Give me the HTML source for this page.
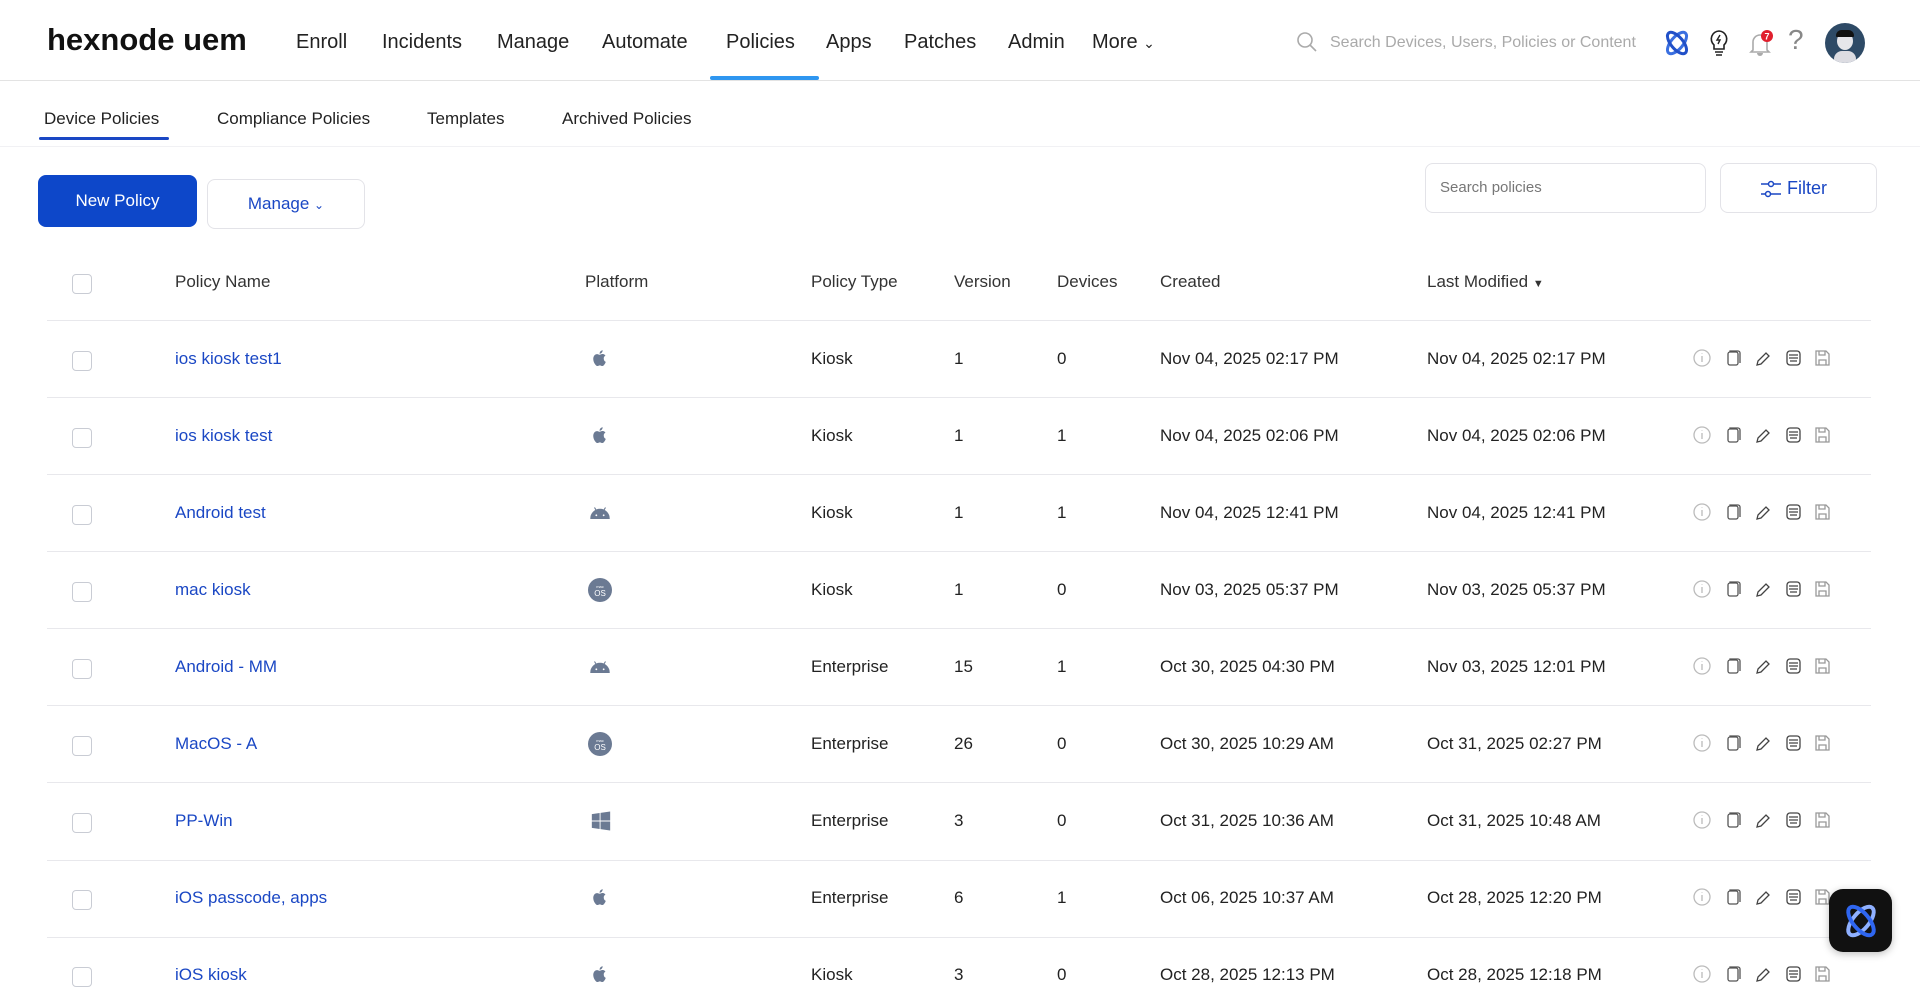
<!DOCTYPE html>
<html><head><meta charset="utf-8"><style>
*{box-sizing:border-box;margin:0;padding:0}
body{width:1920px;height:978px;overflow:hidden;background:#fff;font-family:"Liberation Sans",sans-serif;color:#1b1b1b;position:relative}
.a{position:absolute;white-space:nowrap}
.nav{font-size:20px;color:#222;top:31px}
.sub{font-size:17px;color:#222;top:109px}
.th{font-size:17px;color:#333;top:272px}
.cell{font-size:17px;color:#222}
.link{color:#1a47c4}
.line{position:absolute;left:47px;width:1824px;height:1px;background:#e8e8ec}
.cb{position:absolute;left:72px;width:20px;height:20px;border:1px solid #c9ccd4;border-radius:4px;background:#fff}
</style></head><body>
<svg width="0" height="0" style="position:absolute">
<defs>
<symbol id="apple" viewBox="0 0 24 24"><path fill="#6b7a93" d="M16.5 12.6c0-2.4 2-3.5 2-3.6-1.1-1.6-2.8-1.8-3.4-1.8-1.4-.1-2.800.9-3.500.9-.7 0-1.8-.8-3-.8C7 7.3 5.5 8.2 4.7 9.7c-1.7 2.9-.4 7.2 1.2 9.5.8 1.1 1.7 2.4 2.9 2.4 1.2 0 1.6-.8 3-.8s1.8.8 3 .8c1.3 0 2.1-1.2 2.8-2.3.9-1.3 1.3-2.6 1.3-2.7-.1 0-2.4-.9-2.4-4zM14.2 5.6c.6-.8 1.1-1.8 1-2.9-.9 0-2.1.6-2.7 1.4-.6.7-1.1 1.8-1 2.8 1 .1 2.1-.5 2.7-1.3z"/></symbol>
<symbol id="android" viewBox="0 0 24 24"><path fill="#6b7a93" d="M2 18a10 10 0 0 1 20 0zM6 6l2.5 4M18 6l-2.5 4" stroke="#6b7a93" stroke-width="1.2"/><circle cx="8" cy="14.5" r="1" fill="#fff"/><circle cx="16" cy="14.5" r="1" fill="#fff"/></symbol>
<symbol id="mac" viewBox="0 0 24 24"><circle cx="12" cy="12" r="12" fill="#6b7a93"/><text x="12" y="10" font-size="4" fill="#fff" text-anchor="middle" font-family="Liberation Sans">mac</text><text x="12" y="18" font-size="8" fill="#fff" text-anchor="middle" font-family="Liberation Sans">OS</text></symbol>
<symbol id="win" viewBox="0 0 24 24"><path fill="#6b7a93" d="M2 4.5l8.5-1.2v8.2H2zM11.5 3.1L22 1.6v9.9H11.5zM2 12.5h8.5v8.2L2 19.5zM11.5 12.5H22v9.9l-10.5-1.5z"/></symbol>
<symbol id="acts" viewBox="0 0 150 20">
<g fill="none" stroke-width="1.3">
<circle cx="10" cy="10" r="8" stroke="#bbb"/><path d="M10 8v6M10 5.5v.5" stroke="#bbb"/>
<rect x="36" y="4" width="10" height="13" rx="2" stroke="#555"/><path d="M38 4V3h8a2 2 0 0 1 2 2v10" stroke="#555"/>
<path d="M65 17l1-4 8-8 3 3-8 8z" stroke="#444"/>
<rect x="95" y="3" width="13" height="14" rx="3" stroke="#444"/><path d="M97 7h9M97 10h9M98 13h7" stroke="#444"/>
<path d="M124 3h10l3 3v11h-13zM127 3v4h6V3M127 17v-5h7v5" stroke="#999"/>
</g></symbol>
</defs></svg>

<div class="a" style="left:47px;top:22px;font-size:31px;font-weight:bold;letter-spacing:0px;color:#111">hexnode uem</div>
<div class="a nav" style="left:296px">Enroll</div>
<div class="a nav" style="left:382px">Incidents</div>
<div class="a nav" style="left:497px">Manage</div>
<div class="a nav" style="left:602px">Automate</div>
<div class="a nav" style="left:726px">Policies</div>
<div class="a nav" style="left:826px">Apps</div>
<div class="a nav" style="left:904px">Patches</div>
<div class="a nav" style="left:1008px">Admin</div>
<div class="a nav" style="left:1092px">More <span style="font-size:14px">&#8964;</span></div>
<div class="a" style="left:710px;top:76px;width:109px;height:4px;background:#2e96f0;border-radius:2px"></div>
<div class="a" style="left:0;top:80px;width:1920px;height:1px;background:#e3e3e3"></div>
<svg class="a" style="left:1296px;top:31px" width="22" height="22" viewBox="0 0 22 22"><circle cx="9" cy="9" r="7" fill="none" stroke="#aaa" stroke-width="1.6"/><path d="M14 14l6 6" stroke="#aaa" stroke-width="1.6"/></svg>
<div class="a" style="left:1330px;top:34px;font-size:16px;color:#aaa">Search Devices, Users, Policies or Content</div>
<svg class="a" style="left:1662px;top:28px" width="30" height="30" viewBox="0 0 30 30"><ellipse cx="15" cy="15" rx="6" ry="13" transform="rotate(40 15 15)" fill="none" stroke="#3a6fe0" stroke-width="3"/><ellipse cx="15" cy="15" rx="6" ry="13" transform="rotate(-40 15 15)" fill="none" stroke="#2150c8" stroke-width="3"/></svg>
<svg class="a" style="left:1706px;top:28px" width="26" height="30" viewBox="0 0 26 30"><path d="M13 3a8 8 0 0 0-5 14v4h10v-4A8 8 0 0 0 13 3zM9 24h8M10 27h6" fill="none" stroke="#222" stroke-width="1.6"/><path d="M14 7l-3 5h3l-2 4" fill="none" stroke="#222" stroke-width="1.4"/></svg>
<svg class="a" style="left:1746px;top:28px" width="30" height="30" viewBox="0 0 30 30"><path d="M7 22V14a7 7 0 0 1 14 0v8l2 2H5z" fill="none" stroke="#aaa" stroke-width="1.6"/><path d="M11 25a3 3 0 0 0 6 0" fill="#aaa"/><circle cx="21" cy="8" r="6" fill="#e0202e"/><text x="21" y="11.5" font-size="9" font-weight="bold" fill="#fff" text-anchor="middle" font-family="Liberation Sans">7</text></svg>
<div class="a" style="left:1788px;top:24px;font-size:28px;color:#888">?</div>
<div class="a" style="left:1825px;top:23px;width:40px;height:40px;border-radius:50%;background:#2e4a66;overflow:hidden"><div style="position:absolute;left:12px;top:9px;width:16px;height:18px;border-radius:50%;background:#e6e6ea"></div><div style="position:absolute;left:11px;top:7px;width:18px;height:7px;border-radius:9px 9px 2px 2px;background:#111"></div><div style="position:absolute;left:9px;top:28px;width:22px;height:14px;border-radius:8px 8px 0 0;background:#dcdce2"></div></div>

<div class="a" style="left:0;top:81px;width:1920px;height:66px;background:#fff;border-bottom:1px solid #f1f1f4"></div>
<div class="a sub" style="left:44px">Device Policies</div>
<div class="a sub" style="left:217px">Compliance Policies</div>
<div class="a sub" style="left:427px">Templates</div>
<div class="a sub" style="left:562px">Archived Policies</div>
<div class="a" style="left:39px;top:137px;width:130px;height:3px;background:#1a47c4;border-radius:2px"></div>

<div class="a" style="left:38px;top:175px;width:159px;height:52px;background:#0d47c9;border-radius:8px;color:#fff;font-size:17px;text-align:center;line-height:52px">New Policy</div>
<div class="a" style="left:207px;top:179px;width:158px;height:50px;border:1px solid #e3e3e8;border-radius:8px;color:#1a47c4;font-size:17px;text-align:center;line-height:48px">Manage <span style="font-size:12px">&#8964;</span></div>
<div class="a" style="left:1425px;top:163px;width:281px;height:50px;border:1px solid #e3e3e8;border-radius:8px;color:#777;font-size:15px;line-height:48px;padding-left:14px">Search policies</div>
<div class="a" style="left:1720px;top:163px;width:157px;height:50px;border:1px solid #e3e3e8;border-radius:8px;color:#1a47c4;font-size:18px;line-height:48px;padding-left:40px"><svg style="position:absolute;left:39px;top:15px" width="22" height="20" viewBox="0 0 22 20"><g fill="none" stroke="#1a47c4" stroke-width="1.5"><path d="M1 5h7M14 5h7M1 15h4M11 15h10"/><circle cx="11" cy="5" r="2.5"/><circle cx="8" cy="15" r="2.5"/></g></svg><span style="margin-left:26px">Filter</span></div>

<div class="cb" style="top:274px"></div>
<div class="a th" style="left:175px">Policy Name</div>
<div class="a th" style="left:585px">Platform</div>
<div class="a th" style="left:811px">Policy Type</div>
<div class="a th" style="left:954px">Version</div>
<div class="a th" style="left:1057px">Devices</div>
<div class="a th" style="left:1160px">Created</div>
<div class="a th" style="left:1427px">Last Modified <span style="font-size:11px">&#9660;</span></div>
<div class="line" style="top:320px"></div>

<div class="cb" style="top:351px"></div><div class="a cell link" style="left:175px;top:349px">ios kiosk test1</div><svg class="a" style="left:590px;top:347px" width="20" height="22"><use href="#apple"/></svg><div class="a cell" style="left:811px;top:349px">Kiosk</div><div class="a cell" style="left:954px;top:349px">1</div><div class="a cell" style="left:1057px;top:349px">0</div><div class="a cell" style="left:1160px;top:349px">Nov 04, 2025 02:17 PM</div><div class="a cell" style="left:1427px;top:349px">Nov 04, 2025 02:17 PM</div><svg class="a" style="left:1692px;top:348px" width="150" height="20"><use href="#acts"/></svg><div class="line" style="top:397px"></div>
<div class="cb" style="top:428px"></div><div class="a cell link" style="left:175px;top:426px">ios kiosk test</div><svg class="a" style="left:590px;top:424px" width="20" height="22"><use href="#apple"/></svg><div class="a cell" style="left:811px;top:426px">Kiosk</div><div class="a cell" style="left:954px;top:426px">1</div><div class="a cell" style="left:1057px;top:426px">1</div><div class="a cell" style="left:1160px;top:426px">Nov 04, 2025 02:06 PM</div><div class="a cell" style="left:1427px;top:426px">Nov 04, 2025 02:06 PM</div><svg class="a" style="left:1692px;top:425px" width="150" height="20"><use href="#acts"/></svg><div class="line" style="top:474px"></div>
<div class="cb" style="top:505px"></div><div class="a cell link" style="left:175px;top:503px">Android test</div><svg class="a" style="left:588px;top:502px" width="24" height="22"><use href="#android"/></svg><div class="a cell" style="left:811px;top:503px">Kiosk</div><div class="a cell" style="left:954px;top:503px">1</div><div class="a cell" style="left:1057px;top:503px">1</div><div class="a cell" style="left:1160px;top:503px">Nov 04, 2025 12:41 PM</div><div class="a cell" style="left:1427px;top:503px">Nov 04, 2025 12:41 PM</div><svg class="a" style="left:1692px;top:502px" width="150" height="20"><use href="#acts"/></svg><div class="line" style="top:551px"></div>
<div class="cb" style="top:582px"></div><div class="a cell link" style="left:175px;top:580px">mac kiosk</div><svg class="a" style="left:588px;top:578px" width="24" height="24"><use href="#mac"/></svg><div class="a cell" style="left:811px;top:580px">Kiosk</div><div class="a cell" style="left:954px;top:580px">1</div><div class="a cell" style="left:1057px;top:580px">0</div><div class="a cell" style="left:1160px;top:580px">Nov 03, 2025 05:37 PM</div><div class="a cell" style="left:1427px;top:580px">Nov 03, 2025 05:37 PM</div><svg class="a" style="left:1692px;top:579px" width="150" height="20"><use href="#acts"/></svg><div class="line" style="top:628px"></div>
<div class="cb" style="top:659px"></div><div class="a cell link" style="left:175px;top:657px">Android - MM</div><svg class="a" style="left:588px;top:656px" width="24" height="22"><use href="#android"/></svg><div class="a cell" style="left:811px;top:657px">Enterprise</div><div class="a cell" style="left:954px;top:657px">15</div><div class="a cell" style="left:1057px;top:657px">1</div><div class="a cell" style="left:1160px;top:657px">Oct 30, 2025 04:30 PM</div><div class="a cell" style="left:1427px;top:657px">Nov 03, 2025 12:01 PM</div><svg class="a" style="left:1692px;top:656px" width="150" height="20"><use href="#acts"/></svg><div class="line" style="top:705px"></div>
<div class="cb" style="top:736px"></div><div class="a cell link" style="left:175px;top:734px">MacOS - A</div><svg class="a" style="left:588px;top:732px" width="24" height="24"><use href="#mac"/></svg><div class="a cell" style="left:811px;top:734px">Enterprise</div><div class="a cell" style="left:954px;top:734px">26</div><div class="a cell" style="left:1057px;top:734px">0</div><div class="a cell" style="left:1160px;top:734px">Oct 30, 2025 10:29 AM</div><div class="a cell" style="left:1427px;top:734px">Oct 31, 2025 02:27 PM</div><svg class="a" style="left:1692px;top:733px" width="150" height="20"><use href="#acts"/></svg><div class="line" style="top:782px"></div>
<div class="cb" style="top:813px"></div><div class="a cell link" style="left:175px;top:811px">PP-Win</div><svg class="a" style="left:590px;top:810px" width="22" height="22"><use href="#win"/></svg><div class="a cell" style="left:811px;top:811px">Enterprise</div><div class="a cell" style="left:954px;top:811px">3</div><div class="a cell" style="left:1057px;top:811px">0</div><div class="a cell" style="left:1160px;top:811px">Oct 31, 2025 10:36 AM</div><div class="a cell" style="left:1427px;top:811px">Oct 31, 2025 10:48 AM</div><svg class="a" style="left:1692px;top:810px" width="150" height="20"><use href="#acts"/></svg><div class="line" style="top:860px"></div>
<div class="cb" style="top:890px"></div><div class="a cell link" style="left:175px;top:888px">iOS passcode, apps</div><svg class="a" style="left:590px;top:886px" width="20" height="22"><use href="#apple"/></svg><div class="a cell" style="left:811px;top:888px">Enterprise</div><div class="a cell" style="left:954px;top:888px">6</div><div class="a cell" style="left:1057px;top:888px">1</div><div class="a cell" style="left:1160px;top:888px">Oct 06, 2025 10:37 AM</div><div class="a cell" style="left:1427px;top:888px">Oct 28, 2025 12:20 PM</div><svg class="a" style="left:1692px;top:887px" width="150" height="20"><use href="#acts"/></svg><div class="line" style="top:937px"></div>
<div class="cb" style="top:967px"></div><div class="a cell link" style="left:175px;top:965px">iOS kiosk</div><svg class="a" style="left:590px;top:963px" width="20" height="22"><use href="#apple"/></svg><div class="a cell" style="left:811px;top:965px">Kiosk</div><div class="a cell" style="left:954px;top:965px">3</div><div class="a cell" style="left:1057px;top:965px">0</div><div class="a cell" style="left:1160px;top:965px">Oct 28, 2025 12:13 PM</div><div class="a cell" style="left:1427px;top:965px">Oct 28, 2025 12:18 PM</div><svg class="a" style="left:1692px;top:964px" width="150" height="20"><use href="#acts"/></svg>

<div class="a" style="left:1829px;top:889px;width:63px;height:63px;border-radius:14px;background:#111;box-shadow:0 2px 8px rgba(0,0,0,.25)">
<svg style="position:absolute;left:12px;top:12px" width="40" height="40" viewBox="0 0 30 30"><ellipse cx="15" cy="15" rx="6" ry="13" transform="rotate(40 15 15)" fill="none" stroke="#8fb0ff" stroke-width="3"/><ellipse cx="15" cy="15" rx="6" ry="13" transform="rotate(-40 15 15)" fill="none" stroke="#2f66f0" stroke-width="3"/></svg>
</div>
</body></html>
